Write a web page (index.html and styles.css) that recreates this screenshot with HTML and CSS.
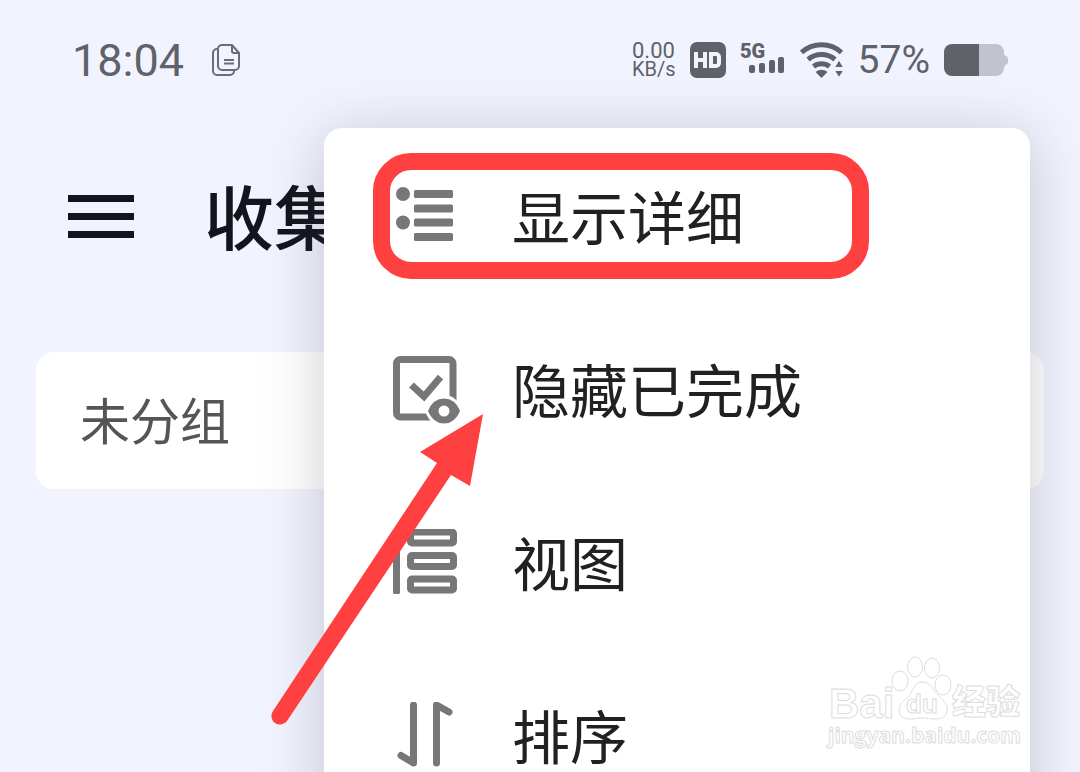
FILE: index.html
```html
<!DOCTYPE html>
<html lang="zh-CN">
<head>
    <meta charset="UTF-8">
    <meta name="viewport" content="width=device-width, initial-scale=1.0">
    <title>收集</title>
    <link rel="stylesheet" href="styles.css">
</head>
<body>
    <div class="screen">
        <div class="status-bar">
            <div class="status-group status-left">
                <span class="time">18:04</span>
                <svg class="icon-copy" width="28" height="32" viewBox="0 0 28 32">
                    <path d="M6 5H5a4 4 0 0 0-4 4v18a4 4 0 0 0 4 4h13a4 4 0 0 0 4-4"/>
                    <path d="M10 1h10l7 8v13a4 4 0 0 1-4 4H10a4 4 0 0 1-4-4V5a4 4 0 0 1 4-4z"/>
                    <path d="M20 1v6a2 2 0 0 0 2 2h5M12 16h10M12 19.500h10"/>
                </svg>
            </div>

            <div class="status-group status-right">
                <div class="net-speed">
                    <span class="speed-value">0.00</span>
                    <span class="speed-unit">KB/s</span>
                </div>
                <svg width="36" height="36" viewBox="0 0 36 36">
                    <rect width="36" height="36" rx="7" fill="#5f6269"/>
                    <path d="M6 10v16M15 10v16M6 18h9" fill="none" stroke="#f1f4fd" stroke-width="4"/>
                    <path d="M21 12h5a3 3 0 0 1 3 3v6a3 3 0 0 1-3 3h-5z" fill="none" stroke="#f1f4fd" stroke-width="4"/>
                </svg>
                <svg class="signal" width="46" height="36" viewBox="0 0 46 36">
                    <text x="0" y="16">5G</text>
                    <rect x="9" y="23" width="6" height="8" rx="2"/>
                    <rect x="19" y="21" width="6" height="10" rx="2"/>
                    <rect x="29" y="18" width="6" height="13" rx="2"/>
                    <rect x="38" y="15" width="6" height="16" rx="2"/>
                </svg>
                <svg width="44" height="36" viewBox="0 0 44 36">
                    <g fill="none" stroke="#5f6269" stroke-width="5">
                        <path d="M1.500 10.500a30 30 0 0 1 40 0"/>
                        <path d="M8 17.500a21 21 0 0 1 27 0"/>
                        <path d="M13.500 24.500a13 13 0 0 1 16 0"/>
                    </g>
                    <path d="M15.500 30q6-4.500 12 0l-6 6z" fill="#5f6269"/>
                    <path d="M34.500 25.500h9L39 18zM34.500 28.500h9L39 35.500z" fill="#5f6269" stroke="#f1f4fd" stroke-width="1"/>
                </svg>
                <span class="percent">57%</span>
                <svg width="64" height="32" viewBox="0 0 64 32">
                    <path d="M34 0h18a8 8 0 0 1 8 8v2q0 1 2 2t2 3v3q0 2-2 3t-2 2v1a8 8 0 0 1-8 8H34z" fill="#c1c3cf"/>
                    <path d="M8 0h27v32H8a8 8 0 0 1-8-8V8a8 8 0 0 1 8-8z" fill="#5f6269"/>
                </svg>
            </div>
        </div>

        <header class="header">
            <button class="menu-button" aria-label="菜单">
                <span></span>
                <span></span>
                <span></span>
            </button>
            <h1 class="title">收集</h1>
        </header>

        <main class="content">
            <section class="group-card">未分组</section>
        </main>

        <div class="popup-menu">
            <button class="menu-item">
                <svg class="menu-icon" viewBox="0 0 68 72">
                    <circle cx="11" cy="11" r="7"/>
                    <circle cx="11" cy="39.500" r="7"/>
                    <rect x="22" y="7" width="39" height="8" rx="1.500"/>
                    <rect x="22" y="21.500" width="39" height="8" rx="1.500"/>
                    <rect x="22" y="35.500" width="39" height="8" rx="1.500"/>
                    <rect x="22" y="50" width="39" height="8" rx="1.500"/>
                </svg>
                <span class="menu-label">显示详细</span>
            </button>
            <button class="menu-item">
                <svg class="menu-icon" viewBox="0 0 68 72">
                    <rect class="line" x="4.500" y="3.500" width="56.500" height="57.500" rx="4"/>
                    <path class="line" d="M19.500 29L32 40.500 48.500 21"/>
                    <path d="M33 55q6-16 19-16t19 16q-6 16-19 16t-19-16z" fill="#fff"/>
                    <path d="M36 55q5-12.500 16-12.500t16 12.500q-5 12.500-16 12.500t-16-12.500z"/>
                    <circle cx="52" cy="55" r="5.500" fill="#fff"/>
                </svg>
                <span class="menu-label">隐藏已完成</span>
            </button>
            <button class="menu-item">
                <svg class="menu-icon" viewBox="0 0 68 72">
                    <rect x="1" y="0" width="7" height="65" rx="1.500"/>
                    <rect class="line" x="18.500" y="3" width="43" height="11" rx="1.500"/>
                    <rect class="line" x="18.500" y="26.500" width="43" height="11" rx="1.500"/>
                    <rect class="line" x="18.500" y="50" width="43" height="11" rx="1.500"/>
                </svg>
                <span class="menu-label">视图</span>
            </button>
            <button class="menu-item">
                <svg class="menu-icon" viewBox="0 0 68 72">
                    <path class="line round" d="M21.500 3v58L9 53.500M44.500 61V3L57 10"/>
                </svg>
                <span class="menu-label">排序</span>
            </button>
        </div>

        <!-- Annotations -->
        <div class="highlight"></div>
        <svg class="arrow" width="222" height="320" viewBox="0 0 222 320">
            <path d="M11 301L175 53 158 42 221 4 208 76 189 65 25 311A8.500 8.500 0 0 1 11 301z" fill="#ff4040"/>
        </svg>

        <svg class="watermark" width="200" height="96" viewBox="0 0 200 96">
            <text class="mark-latin" x="3" y="62">Bai</text>
            <ellipse cx="74" cy="25" rx="8" ry="10"/>
            <ellipse cx="89" cy="11" rx="7.500" ry="10"/>
            <ellipse cx="106" cy="12" rx="7.500" ry="10"/>
            <ellipse cx="117" cy="29" rx="8" ry="10"/>
            <path d="M96 26c9 0 11 8 17 14s9 9 8 15-6 8-12 8c-5 0-8-1-13-1s-8 1-12 1c-7 0-11-3-11-9s5-9 9-13c5-5 6-15 14-15z"/>
            <text class="mark-du" x="80" y="57">du</text>
            <text class="mark-cjk" x="126" y="58">经验</text>
            <text class="mark-url" x="2" y="87">jingyan.baidu.com</text>
        </svg>
    </div>
</body>
</html>
```
FILE: styles.css
```css
* {
    box-sizing: border-box;
}

body {
    margin: 0;
    background-color: #f1f4fe;
    font-family: "Noto Sans CJK SC", sans-serif;
    color: #212121;
}

button {
    border: 0;
    padding: 0;
    background: none;
    color: inherit;
    font: inherit;
    cursor: pointer;
}

svg {
    display: block;
    flex-shrink: 0;
}

.screen {
    position: relative;
    height: 100vh;
    overflow: hidden;
}

/* Status bar */
.status-bar {
    display: flex;
    align-items: center;
    justify-content: space-between;
    height: 120px;
    padding: 0 72px;
    color: #5f6269;
    font-family: Roboto, sans-serif;
}

.status-group {
    display: flex;
    align-items: center;
}

.status-left {
    gap: 28px;
}

.status-right {
    gap: 14px;
}

.time {
    font-size: 45px;
}

.icon-copy {
    fill: none;
    stroke: #6a6d74;
    stroke-width: 2;
}

.net-speed {
    display: flex;
    flex-direction: column;
    line-height: 19px;
}

.speed-value {
    font-size: 22px;
}

.speed-unit {
    font-size: 20px;
}

.signal {
    overflow: visible;
    fill: #5f6269;
    font-size: 20px;
    font-weight: 900;
}

.percent {
    font-size: 39px;
}

/* Page header */
.header {
    display: flex;
    align-items: center;
    gap: 70px;
    height: 192px;
    padding: 0 68px;
}

.menu-button {
    display: flex;
    flex-direction: column;
    gap: 11px;
    width: 66px;
}

.menu-button span {
    height: 7px;
    background-color: #11161c;
}

.title {
    margin: 0;
    padding-bottom: 2px;
    color: #11161c;
    font-size: 70px;
    font-weight: 500;
    line-height: 80px;
}

.content {
    padding: 40px 36px;
}

.group-card {
    padding: 30px 44px 34px;
    border-radius: 18px;
    background-color: #fff;
    color: #555;
    font-size: 50px;
    line-height: 73px;
}

/* Popup menu */
.popup-menu {
    position: absolute;
    top: 128px;
    left: 324px;
    right: 50px;
    padding: 4px 0 48px;
    border-radius: 18px;
    background-color: #fff;
    box-shadow: 0 8px 60px rgba(60, 60, 80, 0.26);
}

.menu-item {
    display: flex;
    align-items: center;
    gap: 52px;
    width: 100%;
    height: 173px;
    padding: 0 68px;
    font-size: 58px;
    line-height: 80px;
}

.menu-label {
    padding-bottom: 8px;
}

.menu-icon {
    width: 68px;
    height: 72px;
    fill: #777;
}

.menu-icon .line {
    fill: none;
    stroke: #777;
    stroke-width: 7;
}

.menu-icon .round {
    stroke-linecap: round;
    stroke-linejoin: round;
}

/* Annotations */
.highlight {
    position: absolute;
    top: 153px;
    left: 373px;
    width: 496px;
    height: 126px;
    border: 17px solid #ff4040;
    border-radius: 38px;
}

.arrow {
    position: absolute;
    top: 410px;
    left: 262px;
}

.watermark {
    position: absolute;
    right: 54px;
    bottom: 20px;
    overflow: visible;
    fill: #fff;
    stroke: #ddd;
    stroke-width: 1;
}

.mark-latin {
    font-family: "Liberation Sans", sans-serif;
    font-size: 42px;
    font-weight: bold;
}

.mark-du {
    font-family: "Liberation Sans", sans-serif;
    font-size: 26px;
    font-weight: bold;
}

.mark-cjk {
    font-size: 34px;
    font-weight: 900;
}

.mark-url {
    font-family: "Open Sans", sans-serif;
    font-size: 21px;
    font-weight: bold;
}
```
